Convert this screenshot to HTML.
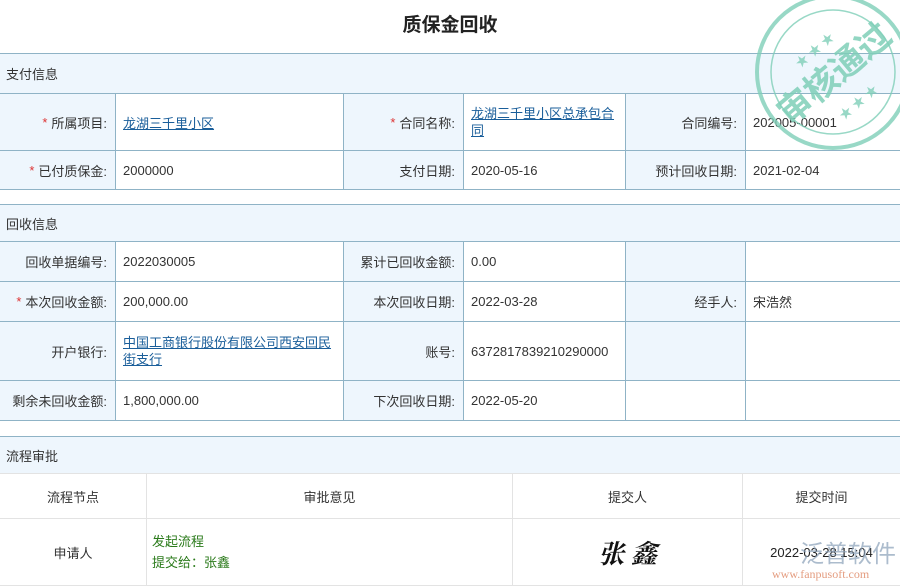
<!DOCTYPE html>
<html><head><meta charset="utf-8"><style>
*{margin:0;padding:0;box-sizing:border-box}
body{width:900px;height:586px;overflow:hidden;background:#fff;font-family:"Liberation Sans","Noto Sans CJK SC",sans-serif;font-size:13px;color:#333;position:relative}
.a{position:absolute}
.sec{position:absolute;left:0;width:900px;background:#eef6fd;border-top:1px solid #8fb3c6;border-bottom:1px solid #8fb3c6;padding-left:6px;display:flex;align-items:center}
.c{position:absolute;border-left:1px solid #8fb3c6;border-top:1px solid #8fb3c6;border-bottom:1px solid #8fb3c6;display:flex;align-items:center}
.l{background:#eef6fd;justify-content:flex-end;padding-right:8px}
.v{background:#fff;padding-left:7px}
.s{color:#d33;margin-right:4px}
a{color:#1a5e9a;text-decoration:underline}
.f{position:absolute;border-left:1px solid #e3e3e3;border-top:1px solid #e3e3e3;border-bottom:1px solid #e3e3e3;display:flex;align-items:center;justify-content:center}
</style></head><body>
<div class="a" style="left:0;top:10px;width:900px;text-align:center;font-size:19px;font-weight:bold;color:#222">质保金回收</div>

<div class="sec" style="top:53px;height:41px">支付信息</div>
<div class="c l" style="left:0;top:93px;width:115px;height:58px;border-left:none"><span class="s">*</span>所属项目:</div>
<div class="c v" style="left:115px;top:93px;width:228px;height:58px"><a>龙湖三千里小区</a></div>
<div class="c l" style="left:343px;top:93px;width:120px;height:58px"><span class="s">*</span>合同名称:</div>
<div class="c v" style="left:463px;top:93px;width:162px;height:58px;line-height:17px;padding-right:6px"><a>龙湖三千里小区总承包合同</a></div>
<div class="c l" style="left:625px;top:93px;width:120px;height:58px">合同编号:</div>
<div class="c v" style="left:745px;top:93px;width:155px;height:58px">202005-00001</div>
<div class="c l" style="left:0;top:150px;width:115px;height:40px;border-left:none"><span class="s">*</span>已付质保金:</div>
<div class="c v" style="left:115px;top:150px;width:228px;height:40px">2000000</div>
<div class="c l" style="left:343px;top:150px;width:120px;height:40px">支付日期:</div>
<div class="c v" style="left:463px;top:150px;width:162px;height:40px">2020-05-16</div>
<div class="c l" style="left:625px;top:150px;width:120px;height:40px">预计回收日期:</div>
<div class="c v" style="left:745px;top:150px;width:155px;height:40px">2021-02-04</div>

<div class="sec" style="top:204px;height:38px">回收信息</div>
<div class="c l" style="left:0;top:241px;width:115px;height:41px;border-left:none">回收单据编号:</div>
<div class="c v" style="left:115px;top:241px;width:228px;height:41px">2022030005</div>
<div class="c l" style="left:343px;top:241px;width:120px;height:41px">累计已回收金额:</div>
<div class="c v" style="left:463px;top:241px;width:162px;height:41px">0.00</div>
<div class="c l" style="left:625px;top:241px;width:120px;height:41px"></div>
<div class="c v" style="left:745px;top:241px;width:155px;height:41px"></div>
<div class="c l" style="left:0;top:281px;width:115px;height:41px;border-left:none"><span class="s">*</span>本次回收金额:</div>
<div class="c v" style="left:115px;top:281px;width:228px;height:41px">200,000.00</div>
<div class="c l" style="left:343px;top:281px;width:120px;height:41px">本次回收日期:</div>
<div class="c v" style="left:463px;top:281px;width:162px;height:41px">2022-03-28</div>
<div class="c l" style="left:625px;top:281px;width:120px;height:41px">经手人:</div>
<div class="c v" style="left:745px;top:281px;width:155px;height:41px">宋浩然</div>
<div class="c l" style="left:0;top:321px;width:115px;height:60px;border-left:none">开户银行:</div>
<div class="c v" style="left:115px;top:321px;width:228px;height:60px;line-height:17px;padding-right:8px"><a>中国工商银行股份有限公司西安回民街支行</a></div>
<div class="c l" style="left:343px;top:321px;width:120px;height:60px">账号:</div>
<div class="c v" style="left:463px;top:321px;width:162px;height:60px">6372817839210290000</div>
<div class="c l" style="left:625px;top:321px;width:120px;height:60px"></div>
<div class="c v" style="left:745px;top:321px;width:155px;height:60px"></div>
<div class="c l" style="left:0;top:380px;width:115px;height:41px;border-left:none">剩余未回收金额:</div>
<div class="c v" style="left:115px;top:380px;width:228px;height:41px">1,800,000.00</div>
<div class="c l" style="left:343px;top:380px;width:120px;height:41px">下次回收日期:</div>
<div class="c v" style="left:463px;top:380px;width:162px;height:41px">2022-05-20</div>
<div class="c l" style="left:625px;top:380px;width:120px;height:41px;background:#fff"></div>
<div class="c v" style="left:745px;top:380px;width:155px;height:41px"></div>

<div class="sec" style="top:436px;height:38px;border-bottom-color:#e3e3e3">流程审批</div>
<div class="f" style="left:0;top:473px;width:146px;height:46px;border-left:none">流程节点</div>
<div class="f" style="left:146px;top:473px;width:366px;height:46px">审批意见</div>
<div class="f" style="left:512px;top:473px;width:230px;height:46px">提交人</div>
<div class="f" style="left:742px;top:473px;width:158px;height:46px">提交时间</div>
<div class="f" style="left:0;top:518px;width:146px;height:68px;border-left:none">申请人</div>
<div class="f" style="left:146px;top:518px;width:366px;height:68px;justify-content:flex-start;padding-left:5px;color:#2a7a1a;line-height:21px"><div>发起流程<br>提交给：张鑫</div></div>
<div class="f" style="left:512px;top:518px;width:230px;height:68px;font-family:'Noto Serif CJK SC',serif;font-size:26px;font-style:italic;color:#111;font-weight:bold">张 鑫</div>
<div class="f" style="left:742px;top:518px;width:158px;height:68px;color:#222">2022-03-28 15:04</div>
<div class="a" style="left:800px;top:534px;font-size:24px;color:#8aa0b8;opacity:.7">泛普软件</div>
<div class="a" style="left:772px;top:567px;font-size:12px;color:#d9734a;opacity:.7;font-family:'Liberation Serif',serif">www.fanpusoft.com</div>

<svg class="a" style="left:745px;top:-10px" width="170" height="170" viewBox="0 0 170 170">
<g fill="none" stroke="#7fcfb8" opacity=".8">
<circle cx="88" cy="82" r="76" stroke-width="4"/>
<circle cx="88" cy="82" r="62" stroke-width="1.5"/>
</g>
<text x="88" y="96" text-anchor="middle" font-size="34" font-weight="bold" fill="#7fcfb8" opacity=".85" transform="rotate(-40 88 82)" font-family="Noto Sans CJK SC">审核通过</text>
<text x="88" y="58" text-anchor="middle" font-size="13" fill="#7fcfb8" opacity=".8" transform="rotate(-40 88 82)">★ ★ ★</text>
<text x="88" y="126" text-anchor="middle" font-size="13" fill="#7fcfb8" opacity=".8" transform="rotate(-40 88 82)">★ ★ ★</text>
</svg>
</body></html>
